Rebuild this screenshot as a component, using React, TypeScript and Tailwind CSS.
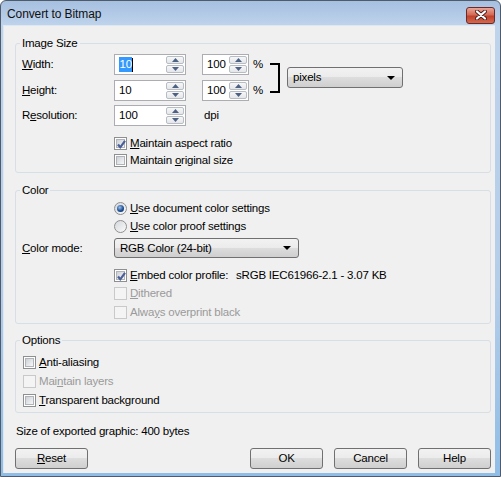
import clsx from "clsx";
import type { ReactNode } from "react";

const FONT =
  "font-['Segoe_UI','Liberation_Sans',Arial,sans-serif] text-[11.5px] leading-[15px] tracking-[-0.2px] whitespace-nowrap";

function SpinButton({ up }: { up?: boolean }) {
  return (
    <span className="flex h-[8px] w-full items-center justify-center rounded-[2px] border border-[#b8bcc3] bg-[linear-gradient(#f7f7f7,#e4e6ea)]">
      <svg width="7" height="4" viewBox="0 0 7 4">
        {up ? <path d="M0 4 L3.5 0 L7 4 Z" fill="#4d6185" /> : <path d="M0 0 L3.5 4 L7 0 Z" fill="#4d6185" />}
      </svg>
    </span>
  );
}

function Spin({ value, className, selected }: { value: string; className: string; selected?: boolean }) {
  return (
    <div className={clsx("flex h-[21px] items-center border border-[#abadb3] bg-white", className)}>
      <div className="flex flex-1 items-center pl-[4px]">
        {selected ? (
          <>
            <span className="bg-[#3399ff] px-[0.5px] text-white">{value}</span>
            <span className="h-[14px] w-[1px] bg-black" />
          </>
        ) : (
          <span>{value}</span>
        )}
      </div>
      <div className="mr-[1px] flex h-[17px] w-[18px] flex-col gap-[1px]">
        <SpinButton up />
        <SpinButton />
      </div>
    </div>
  );
}

function Check({ checked, disabled }: { checked?: boolean; disabled?: boolean }) {
  return (
    <span
      className={clsx(
        "relative flex h-[13px] w-[13px] shrink-0 items-center justify-center border",
        disabled ? "border-[#c9c9c9] bg-[#f4f4f4]" : "border-[#8e8f8f] bg-white",
      )}
    >
      {!disabled && (
        <span className="h-[9px] w-[9px] border border-[#b0b4ba] bg-[linear-gradient(135deg,#cdd1d7,#f7f7f7)]" />
      )}
      {checked && (
        <svg className="absolute left-[1px] top-[1px]" width="11" height="11" viewBox="0 0 11 11">
          <path d="M2 5.5 L4.3 8.3 L9 1.8" fill="none" stroke="#4a5f97" strokeWidth="2.2" />
        </svg>
      )}
    </span>
  );
}

function Radio({ checked }: { checked?: boolean }) {
  return (
    <span className="flex h-[13px] w-[13px] shrink-0 items-center justify-center rounded-full border border-[#8e8f8f] bg-[linear-gradient(135deg,#d4d7db,#fafafa)]">
      {checked && (
        <span className="h-[7px] w-[7px] rounded-full bg-[radial-gradient(circle_at_40%_35%,#9cc2ee,#1f4f94_55%,#0a2358)]" />
      )}
    </span>
  );
}

function Row({
  control,
  children,
  disabled,
  className,
}: {
  control: ReactNode;
  children: ReactNode;
  disabled?: boolean;
  className?: string;
}) {
  return (
    <div className={clsx("flex h-[17px] items-center gap-[3px]", disabled && "text-[#9a9a9a]", className)}>
      {control}
      <span>{children}</span>
    </div>
  );
}

function Dropdown({ value, className }: { value: string; className: string }) {
  return (
    <div
      className={clsx(
        "flex items-center justify-between rounded-[3px] border border-[#707070] bg-[linear-gradient(#f2f2f2,#ebebeb_50%,#dddddd_50%,#cfcfcf)] pl-[5px] pr-[7px]",
        className,
      )}
    >
      <span>{value}</span>
      <svg width="8" height="4" viewBox="0 0 8 4">
        <path d="M0 0 L8 0 L4 4 Z" fill="#000" />
      </svg>
    </div>
  );
}

function Button({ children }: { children: ReactNode }) {
  return (
    <div className="flex h-[21px] w-[73px] items-center justify-center rounded-[3px] border border-[#707070] bg-[linear-gradient(#f2f2f2,#ebebeb_50%,#dddddd_50%,#cfcfcf)]">
      {children}
    </div>
  );
}

function Group({ title, className, children }: { title: string; className?: string; children: ReactNode }) {
  return (
    <fieldset className={clsx("w-[476px] rounded-[3px] border border-[#d5dfe5]", className)}>
      <legend className="ml-[4px] px-[2px] leading-[14px]">{title}</legend>
      {children}
    </fieldset>
  );
}

export default function App() {
  return (
    <div
      className={clsx(
        "flex h-[477px] w-[501px] flex-col rounded-t-[6px] border border-[#505a68] bg-[linear-gradient(#a6c0e0,#bed3ec_24px,#b4cde9_60%,#8fbde6)] text-black",
        FONT,
      )}
    >
      <div className="flex h-[24px] shrink-0 items-center justify-between pl-[6px] pr-[5px]">
        <span className="pt-[2px] text-[12px] tracking-[-0.1px] text-[#111]">Convert to Bitmap</span>
        <div className="mt-[4px] flex h-[17px] w-[29px] items-center justify-center rounded-[3px] border border-[#6b2a2a] bg-[linear-gradient(#e9a597,#d46a55_45%,#c2412b_55%,#d26a4e)]">
          <svg width="12" height="10" viewBox="0 0 12 10">
            <path d="M2 1.5 L10 8.5 M10 1.5 L2 8.5" stroke="#4a1d1d" strokeWidth="4" strokeLinecap="round" />
            <path d="M2 1.5 L10 8.5 M10 1.5 L2 8.5" stroke="#ffffff" strokeWidth="2.2" strokeLinecap="round" />
          </svg>
        </div>
      </div>

      <div className="ml-[2px] mr-[5px] mb-[3px] flex flex-1 flex-col border-l border-t border-[#dfe7f1] bg-[#f0f0f0] pl-[11px]">
        {/* Image Size */}
        <Group title="Image Size" className="mt-[10px]">
          <div className="pl-[6px] pb-[3px]">
            <div className="mt-[4px] flex items-center">
              <div className="flex flex-col gap-[5px]">
                <div className="flex items-center">
                  <span className="w-[92px]">
                    <u>W</u>idth:
                  </span>
                  <Spin value="10" selected className="w-[72px]" />
                  <Spin value="100" className="ml-[16px] w-[47px]" />
                  <span className="ml-[4px]">%</span>
                </div>
                <div className="flex items-center">
                  <span className="w-[92px]">
                    <u>H</u>eight:
                  </span>
                  <Spin value="10" className="w-[72px]" />
                  <Spin value="100" className="ml-[16px] w-[47px]" />
                  <span className="ml-[4px]">%</span>
                </div>
              </div>
              <div className="ml-[7px] h-[30px] w-[10px] border-y-2 border-r-2 border-black" />
              <Dropdown value="pixels" className="ml-[7px] h-[21px] w-[116px]" />
            </div>
            <div className="mt-[4px] flex items-center">
              <span className="w-[92px]">
                R<u>e</u>solution:
              </span>
              <Spin value="100" className="w-[72px]" />
              <span className="ml-[18px]">dpi</span>
            </div>
            <div className="pl-[92px]">
              <Row control={<Check checked />} className="mt-[9px]">
                <u>M</u>aintain aspect ratio
              </Row>
              <Row control={<Check />}>
                Maintain <u>o</u>riginal size
              </Row>
            </div>
          </div>
        </Group>

        {/* Color */}
        <Group title="Color" className="mt-[10px]">
          <div className="pl-[6px] pb-[2px]">
            <div className="pl-[92px]">
              <Row control={<Radio checked />} className="mt-[3px]">
                <u>U</u>se document color settings
              </Row>
              <Row control={<Radio />} className="mt-[1px]">
                <u>U</u>se color proof settings
              </Row>
            </div>
            <div className="mt-[3px] flex items-center">
              <span className="w-[92px]">
                <u>C</u>olor mode:
              </span>
              <Dropdown value="RGB Color (24-bit)" className="h-[20px] w-[185px]" />
            </div>
            <div className="pl-[92px]">
              <div className="mt-[9px] flex h-[17px] items-center gap-[3px]">
                <Check checked />
                <span className="w-[103px]">
                  <u>E</u>mbed color profile:
                </span>
                <span>sRGB IEC61966-2.1 - 3.07 KB</span>
              </div>
              <Row control={<Check disabled />} disabled className="mt-[1px]">
                <u>D</u>ithered
              </Row>
              <Row control={<Check disabled />} disabled className="mt-[2px]">
                Alwa<u>y</u>s overprint black
              </Row>
            </div>
          </div>
        </Group>

        {/* Options */}
        <Group title="Options" className="mt-[9px]">
          <div className="pl-[7px] pb-[3px]">
            <Row control={<Check />} className="mt-[7px]">
              <u>A</u>nti-aliasing
            </Row>
            <Row control={<Check disabled />} disabled className="mt-[2px]">
              Mai<u>n</u>tain layers
            </Row>
            <Row control={<Check />} className="mt-[2px]">
              <u>T</u>ransparent background
            </Row>
          </div>
        </Group>

        <div className="ml-[1px] mt-[11px]">Size of exported graphic: 400 bytes</div>

        <div className="mt-[9px] flex w-[476px] items-center">
          <Button>
            <span>
              <u>R</u>eset
            </span>
          </Button>
          <div className="ml-auto flex gap-[11px]">
            <Button>OK</Button>
            <Button>Cancel</Button>
            <Button>Help</Button>
          </div>
        </div>
      </div>
    </div>
  );
}
